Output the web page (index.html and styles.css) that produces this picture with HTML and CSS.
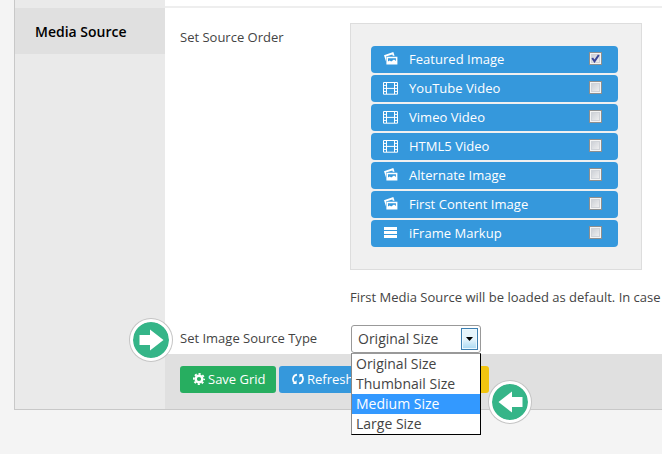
FILE: index.html
```html
<!DOCTYPE html>
<html lang="en">
<head>
<meta charset="utf-8">
<title>Media Source</title>
<link rel="stylesheet" href="styles.css">
</head>
<body>
<svg class="defs" width="0" height="0">
  <symbol id="photos" viewBox="0 0 14 13">
    <path fill="currentColor" d="M0 3.2 9.3 0 10.6 3.8H8.8L8.3 2.5 2 4.6V9.5Z"/>
    <path fill="currentColor" fill-rule="evenodd" d="M2.4 4.8H13.4V12.4H2.4ZM4 6.2V9.6L5.6 8.4 7.2 9.6 10 7.4 11.9 9V6.2Z"/>
  </symbol>
  <symbol id="film" viewBox="0 0 15 13">
    <path fill="none" stroke="currentColor" d="M.5 .5H14.5V12.2H.5ZM3.5 .5V12M11.5 .5V12M3.5 6.4H11.5M.5 3.4H3.5M.5 6.4H3.5M.5 9.4H3.5M11.5 3.4H14.5M11.5 6.4H14.5M11.5 9.4H14.5"/>
  </symbol>
  <symbol id="bars" viewBox="0 0 13 11">
    <path fill="currentColor" d="M0 0H13V3H0ZM0 4H13V7H0ZM0 8H13V11H0Z"/>
  </symbol>
  <symbol id="arrow" viewBox="0 0 24 22">
    <path fill="#fff" d="M0 6H10.5V.5L24 11 10.5 21.5V16H0Z"/>
  </symbol>
</svg>
<div class="panel">
  <nav class="sidebar"><div class="tab">Media Source</div></nav>
  <main class="main">
    <div class="content">
      <div class="row row-order">
        <div class="label">Set Source Order</div>
        <div class="field">
          <ul class="sources">
            <li><svg class="icon photos"><use href="#photos"/></svg><span>Featured Image</span><i class="check"><svg viewBox="0 0 9 9"><path d="M1.2 4 3.5 7.3 7.8 1" fill="none" stroke="#3a4598" stroke-width="2"/></svg></i></li>
            <li><svg class="icon film"><use href="#film"/></svg><span>YouTube Video</span><i class="check"></i></li>
            <li><svg class="icon film"><use href="#film"/></svg><span>Vimeo Video</span><i class="check"></i></li>
            <li><svg class="icon film"><use href="#film"/></svg><span>HTML5 Video</span><i class="check"></i></li>
            <li><svg class="icon photos"><use href="#photos"/></svg><span>Alternate Image</span><i class="check"></i></li>
            <li><svg class="icon photos"><use href="#photos"/></svg><span>First Content Image</span><i class="check"></i></li>
            <li><svg class="icon bars"><use href="#bars"/></svg><span>iFrame Markup</span><i class="check"></i></li>
          </ul>
          <p class="hint">First Media Source will be loaded as default. In case</p>
        </div>
      </div>
      <div class="row row-type">
        <div class="label">Set Image Source Type</div>
        <div class="select">
          <span>Original Size</span><b class="toggle"></b>
          <div class="menu">
            <div>Original Size</div>
            <div>Thumbnail Size</div>
            <div class="chosen">Medium Size</div>
            <div>Large Size</div>
          </div>
        </div>
      </div>
    </div>
    <div class="actions">
      <div class="btn save"><svg viewBox="0 0 12 12"><circle cx="6" cy="6" r="3.3" fill="none" stroke="#fff" stroke-width="2.4"/><circle cx="6" cy="6" r="5.1" fill="none" stroke="#fff" stroke-width="1.8" stroke-dasharray="2.1 1.905" stroke-dashoffset="1.05"/></svg>Save Grid</div>
      <div class="btn refresh"><svg viewBox="0 0 12 12"><path d="M5 1.6C.4 2.2-.2 8 3 10M7 10.4C11.6 9.8 12.2 4 9 2" fill="none" stroke="#fff" stroke-width="1.7"/><path d="M.8 10.9H4.6V7.2ZM11.2 1.1H7.4V4.8Z" fill="#fff"/></svg>Refresh</div>
      <div class="btn extra"></div>
    </div>
  </main>
</div>
<div class="marker marker-right"><svg><use href="#arrow"/></svg></div>
<div class="marker marker-left"><svg><use href="#arrow"/></svg></div>
</body>
</html>
```

FILE: styles.css
```css
* { box-sizing: border-box; }
body {
  margin: 0;
  width: 662px;
  height: 454px;
  overflow: hidden;
  position: relative;
  background: #f4f4f4;
  color: #444;
  font: 13px/20px "Open Sans", "Noto Sans", sans-serif;
}
.defs { position: absolute; }
.panel {
  display: flex;
  height: 410px;
  margin-left: 14px;
  border-left: 1px solid #c8c8c8;
  border-bottom: 1px solid #c8c8c8;
}
.sidebar { width: 150px; flex: none; padding-top: 8px; background: #eaeaea; }
.tab {
  height: 46px;
  padding-left: 20px;
  background: #e0e0e0;
  color: #000;
  font-size: 14px;
  font-weight: 600;
  line-height: 47px;
}
.main { flex: 1; min-width: 0; display: flex; flex-direction: column; background: #fff; }
.content { height: 354px; padding: 6px 0 0 15px; }
.content::before {
  content: "";
  display: block;
  height: 2px;
  margin-left: -15px;
  background: #eee;
}
.row { display: flex; white-space: nowrap; }
.label { width: 170px; flex: none; }
.row-order { padding-top: 15px; }
.row-order .label { padding-top: 4px; }
.sources {
  width: 292px;
  height: 247px;
  margin: 0;
  padding: 22px 23px 22px 20px;
  list-style: none;
  display: flex;
  flex-direction: column;
  gap: 2px;
  background: #f0f0f0;
  border: 1px solid #ddd;
}
.sources li {
  height: 27px;
  flex: none;
  display: flex;
  align-items: center;
  padding: 0 16px 0 12px;
  border-radius: 4px;
  background: #3598dc;
  color: #fff;
}
.sources span { flex: 1; margin-top: -2px; letter-spacing: 0.03px; }
.icon { margin-left: 1px; }
.photos { width: 14px; height: 13px; margin-top: -2px; margin-right: 11px; }
.film { width: 15px; height: 13px; margin-left: 0; margin-right: 11px; }
.bars { width: 13px; height: 11px; margin-top: -2px; margin-right: 12px; }
.check {
  width: 13px;
  height: 13px;
  margin-top: -2px;
  border: 1px solid #8e8f8f;
  background: linear-gradient(135deg, #c5c9d0, #f6f6f6);
  box-shadow: inset 0 0 0 1px #f4f4f4, inset 0 0 0 2px #d0d3d8;
  display: flex;
  align-items: center;
  justify-content: center;
}
.check svg { width: 9px; height: 9px; }
.hint { margin: 17px 0 0; height: 20px; }
.row-type { margin-top: 18px; }
.row-type .label { width: 171px; padding-top: 3px; }
.select {
  position: relative;
  width: 130px;
  height: 28px;
  padding: 2px 2px 2px 6px;
  display: flex;
  justify-content: space-between;
  border: 1px solid #999;
  border-radius: 3px;
  background: #fff;
  font-size: 14px;
  line-height: 21px;
}
.toggle {
  width: 17px;
  height: 22px;
  padding: 8px 0 0 4px;
  border: 1px solid #3c7fb1;
  box-shadow: inset 0 0 0 1px #eefaff;
  background: linear-gradient(#e6f5fc 50%, #a9d9f3);
}
.toggle::before {
  content: "";
  display: block;
  width: 7px;
  height: 4px;
  background: #000;
  clip-path: polygon(0 0, 100% 0, 50% 100%);
}
.menu {
  position: absolute;
  z-index: 2;
  left: -1px;
  top: 27px;
  width: 130px;
  height: 82px;
  border: 1px solid #000;
  border-top-color: #999;
  border-left-color: #888;
  background: #fff;
  line-height: 20px;
}
.menu div { padding-left: 4px; height: 20px; }
.menu .chosen { background: #3399ff; color: #fff; }
.actions {
  height: 55px;
  padding: 12px 15px;
  display: flex;
  gap: 3px;
  background: #e0e0e0;
}
.btn {
  height: 27px;
  border-radius: 3px;
  padding: 0 0 2px 13px;
  display: flex;
  align-items: center;
  color: #fff;
  white-space: nowrap;
}
.btn svg { width: 12px; height: 12px; margin: 1px 3px 0 0; }
.save { width: 96px; background: #27ae60; }
.refresh { width: 104px; background: #3598dc; }
.extra { width: 103px; background: #f1c40f; }
.marker {
  position: absolute;
  z-index: 3;
  width: 42px;
  height: 42px;
  display: flex;
  align-items: center;
  justify-content: center;
  border: 3px solid #fff;
  border-radius: 50%;
  background: #35b588;
  background-clip: padding-box;
  box-shadow: 0 0 0 1px #c4c4c4;
}
.marker svg { width: 25px; height: 22px; flex: none; }
.marker-right { left: 130px; top: 319px; }
.marker-left { left: 489px; top: 381px; }
.marker-left svg { transform: scaleX(-1); }
```
